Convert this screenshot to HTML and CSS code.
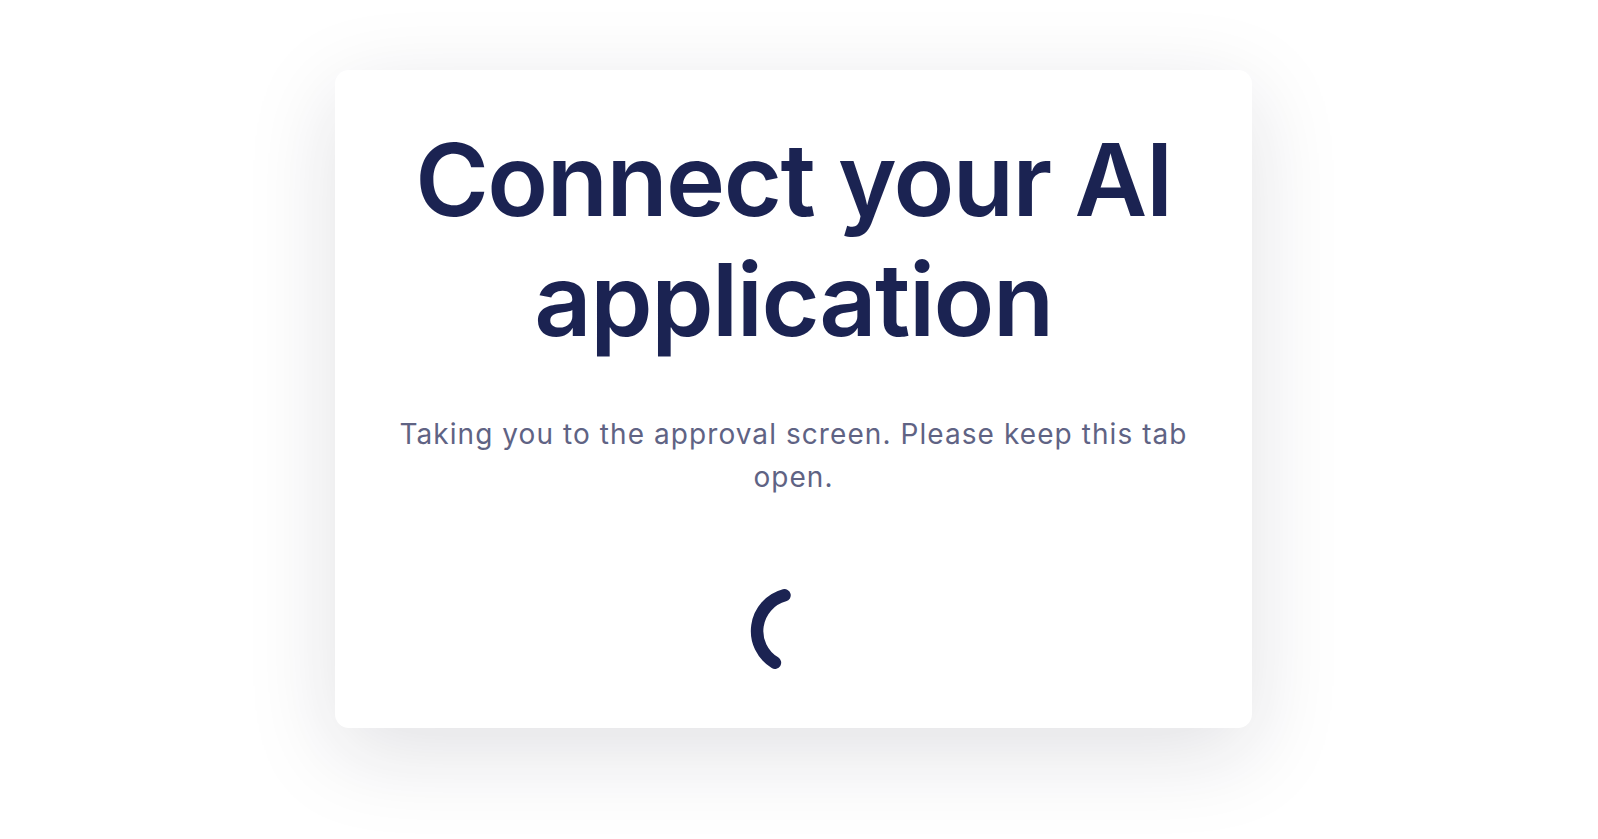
FILE: index.html
```html
<!DOCTYPE html>
<html lang="en">
<head>
<meta charset="utf-8">
<title>Connect your AI application</title>
<link rel="stylesheet" href="styles.css">
</head>
<body>
<main class="page">
  <section class="card">
    <h1 class="title">Connect your AI application</h1>
    <p class="subtitle">Taking you to the approval screen. Please keep this tab open.</p>
    <div class="spinner" aria-label="Loading">
      <svg width="100" height="100" viewBox="0 0 100 100">
        <path d="M40.5 14.3 A37 37 0 0 0 30.94 81.7" fill="none" stroke="#1b2352" stroke-width="12.5" stroke-linecap="round"/>
      </svg>
    </div>
  </section>
</main>
</body>
</html>
```
FILE: styles.css
```css
html, body {
  margin: 0;
  padding: 0;
  background: #ffffff;
}
body {
  font-family: "Inter", "Noto Sans", sans-serif;
}
.page {
  height: 839px;
  display: flex;
  justify-content: center;
  align-items: flex-start;
  padding: 70px 11px 0 0;
  box-sizing: border-box;
}
.card {
  width: 917px;
  height: 658px;
  box-sizing: border-box;
  background: #ffffff;
  border-radius: 14px;
  box-shadow: 0 24px 90px rgba(20, 25, 50, 0.13);
  display: flex;
  flex-direction: column;
  align-items: center;
  padding: 50px 30px 0;
  text-align: center;
}
.title {
  margin: 0;
  font-size: 100px;
  font-weight: 600;
  line-height: 120px;
  letter-spacing: -1.5px;
  color: #1b2352;
}
.subtitle {
  margin: 53px 0 0;
  font-size: 28px;
  line-height: 43px;
  font-weight: 400;
  letter-spacing: 1.07px;
  color: #5f6384;
  max-width: 830px;
}
.spinner {
  margin-top: 82px;
  width: 100px;
  height: 100px;
}
.spinner svg {
  display: block;
}
```
